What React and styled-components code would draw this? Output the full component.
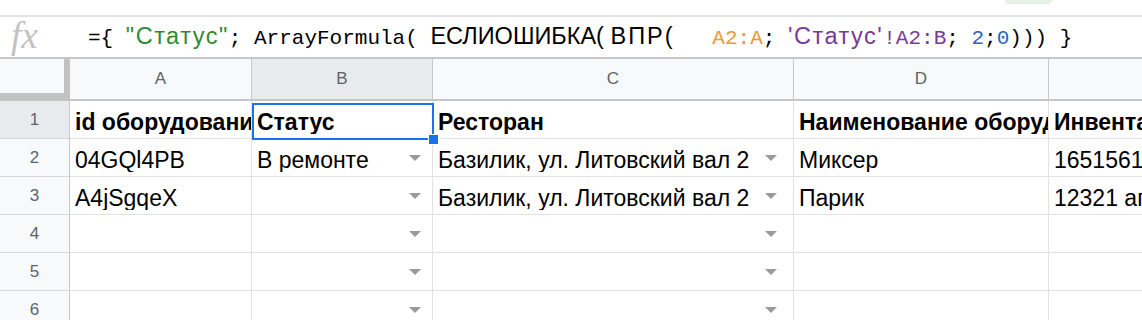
import React from 'react';
import styled, { createGlobalStyle } from 'styled-components';

const GlobalStyle = createGlobalStyle`
  html, body {
    margin: 0;
    padding: 0;
    background: #fff;
    overflow: hidden;
  }
  body {
    font-family: "Liberation Sans", Arial, sans-serif;
  }
`;

const Page = styled.div`
  width: 1142px;
  height: 320px;
  overflow: hidden;
  background: #fff;
`;

const TopStrip = styled.div`
  height: 15px;
  display: flex;
  justify-content: flex-end;
  padding-right: 90px;
  border-bottom: 2px solid #e3e3e3;
`;

const Pill = styled.div`
  width: 47px;
  height: 4px;
  background: #e6f1e8;
  border-radius: 0 0 8px 8px;
`;

const FormulaBar = styled.div`
  height: 40px;
  display: flex;
  align-items: center;
  border-bottom: 2px solid #c7c7c7;
`;

const FxIcon = styled.div`
  width: 88px;
  padding-left: 11px;
  box-sizing: border-box;
  font-family: "Liberation Serif", "Times New Roman", serif;
  font-style: italic;
  font-size: 37px;
  color: #c2c2c2;
  line-height: 1;
  margin-top: -4px;
`;

const Formula = styled.div`
  white-space: pre;
  line-height: 1;
  margin-top: -1px;
`;

const tones = {
  plain: '#000',
  green: '#2f8a35',
  orange: '#ec9a34',
  purple: '#7a3a98',
  blue: '#2f63c4',
};

const Mono = styled.span`
  font-family: "Liberation Mono", "DejaVu Sans Mono", monospace;
  font-size: 21px;
  color: ${props => tones[props.tone || 'plain']};
`;

const Sans = styled.span`
  font-family: "Liberation Sans", Arial, sans-serif;
  font-size: 23.5px;
  letter-spacing: ${props => props.spread || 0}px;
  color: ${props => tones[props.tone || 'plain']};
`;

const Sheet = styled.div`
  display: grid;
  grid-template-columns: 70px 182px 181px 361px 255px 220px;
  width: 1269px;
`;

const Corner = styled.div`
  height: 42px;
  box-sizing: border-box;
  background: #f8f9fa;
  border-right: 6px solid #c2c2c2;
  border-bottom: 8px solid #c2c2c2;
`;

const ColHead = styled.div`
  height: 42px;
  box-sizing: border-box;
  display: flex;
  align-items: center;
  justify-content: center;
  background: ${props => props.active ? '#e8eaed' : '#f8f9fa'};
  border-right: 1px solid #c7c7c7;
  border-bottom: 2px solid #c7c7c7;
  color: #5f6368;
  font-size: 17px;
`;

const RowHead = styled.div`
  height: 38px;
  box-sizing: border-box;
  display: flex;
  align-items: center;
  justify-content: center;
  background: ${props => props.active ? '#e8eaed' : '#f8f9fa'};
  border-right: 1px solid #c7c7c7;
  border-bottom: 1px solid #d8d8d8;
  color: #5f6368;
  font-size: 17px;
`;

const Cell = styled.div`
  position: relative;
  z-index: ${props => props.selected ? 2 : 1};
  height: 38px;
  box-sizing: border-box;
  display: flex;
  align-items: flex-end;
  padding: 0 0 4px 5px;
  border-right: 1px solid #e2e2e2;
  border-bottom: 1px solid #e2e2e2;
  font-size: 23px;
  line-height: 23px;
  font-weight: ${props => props.bold ? 700 : 400};
  color: #000;

  ${props => props.selected && `
    &::after {
      content: '';
      position: absolute;
      top: 2px;
      left: 0;
      right: -2px;
      bottom: -2px;
      border: 2px solid #1a73e8;
    }
    &::before {
      content: '';
      position: absolute;
      right: -7px;
      bottom: -7px;
      width: 9px;
      height: 9px;
      background: #1a73e8;
      border: 1px solid #fff;
      z-index: 3;
    }
  `}
`;

const CellText = styled.span`
  flex: 1;
  min-width: 0;
  overflow: hidden;
  white-space: nowrap;
`;

const Arrow = styled.span`
  align-self: center;
  margin-top: 4px;
  margin-right: ${props => props.gap}px;
  margin-left: 6px;
  width: 0;
  height: 0;
  border-left: 6px solid transparent;
  border-right: 6px solid transparent;
  border-top: 6px solid #9a9a9a;
`;

const columns = ['A', 'B', 'C', 'D', 'E'];

const rows = [
  { n: 1, a: 'id оборудования', b: 'Статус', c: 'Ресторан', d: 'Наименование оборудования', e: 'Инвентарный номер', bold: true },
  { n: 2, a: '04GQl4PB', b: 'В ремонте', c: 'Базилик, ул. Литовский вал 2', d: 'Миксер', e: '165156189', arrows: true },
  { n: 3, a: 'A4jSgqeX', b: '', c: 'Базилик, ул. Литовский вал 2', d: 'Парик', e: '12321 ап', arrows: true },
  { n: 4, a: '', b: '', c: '', d: '', e: '', arrows: true },
  { n: 5, a: '', b: '', c: '', d: '', e: '', arrows: true },
  { n: 6, a: '', b: '', c: '', d: '', e: '', arrows: true },
];

const App = () => {
  return (
    <Page>
      <GlobalStyle />
      <TopStrip>
        <Pill />
      </TopStrip>
      <FormulaBar>
        <FxIcon>fx</FxIcon>
        <Formula>
          <Mono>{'={ '}</Mono>
          <Sans tone="green" spread={1.5}>"Статус"</Sans>
          <Mono>{'; ArrayFormula( '}</Mono>
          <Sans>{'ЕСЛИОШИБКА( '}</Sans>
          <Sans spread={2}>ВПР(</Sans>
          <Mono>{'   '}</Mono>
          <Mono tone="orange">A2:A</Mono>
          <Mono>{'; '}</Mono>
          <Sans tone="purple" spread={1.5}>'Статус'</Sans>
          <Mono tone="purple">!A2:B</Mono>
          <Mono>{'; '}</Mono>
          <Mono tone="blue">2</Mono>
          <Mono>;</Mono>
          <Mono tone="blue">0</Mono>
          <Mono>{'))) }'}</Mono>
        </Formula>
      </FormulaBar>
      <Sheet>
        <Corner />
        {columns.map(c => (
          <ColHead key={c} active={c === 'B'}>{c}</ColHead>
        ))}
        {rows.map(r => (
          <React.Fragment key={r.n}>
            <RowHead active={r.n === 1}>{r.n}</RowHead>
            <Cell bold={r.bold}><CellText>{r.a}</CellText></Cell>
            <Cell bold={r.bold} selected={r.n === 1}>
              <CellText>{r.b}</CellText>
              {r.arrows && <Arrow gap={11} />}
            </Cell>
            <Cell bold={r.bold}>
              <CellText>{r.c}</CellText>
              {r.arrows && <Arrow gap={16} />}
            </Cell>
            <Cell bold={r.bold}><CellText>{r.d}</CellText></Cell>
            <Cell bold={r.bold}><CellText>{r.e}</CellText></Cell>
          </React.Fragment>
        ))}
      </Sheet>
    </Page>
  );
};

export default App;
